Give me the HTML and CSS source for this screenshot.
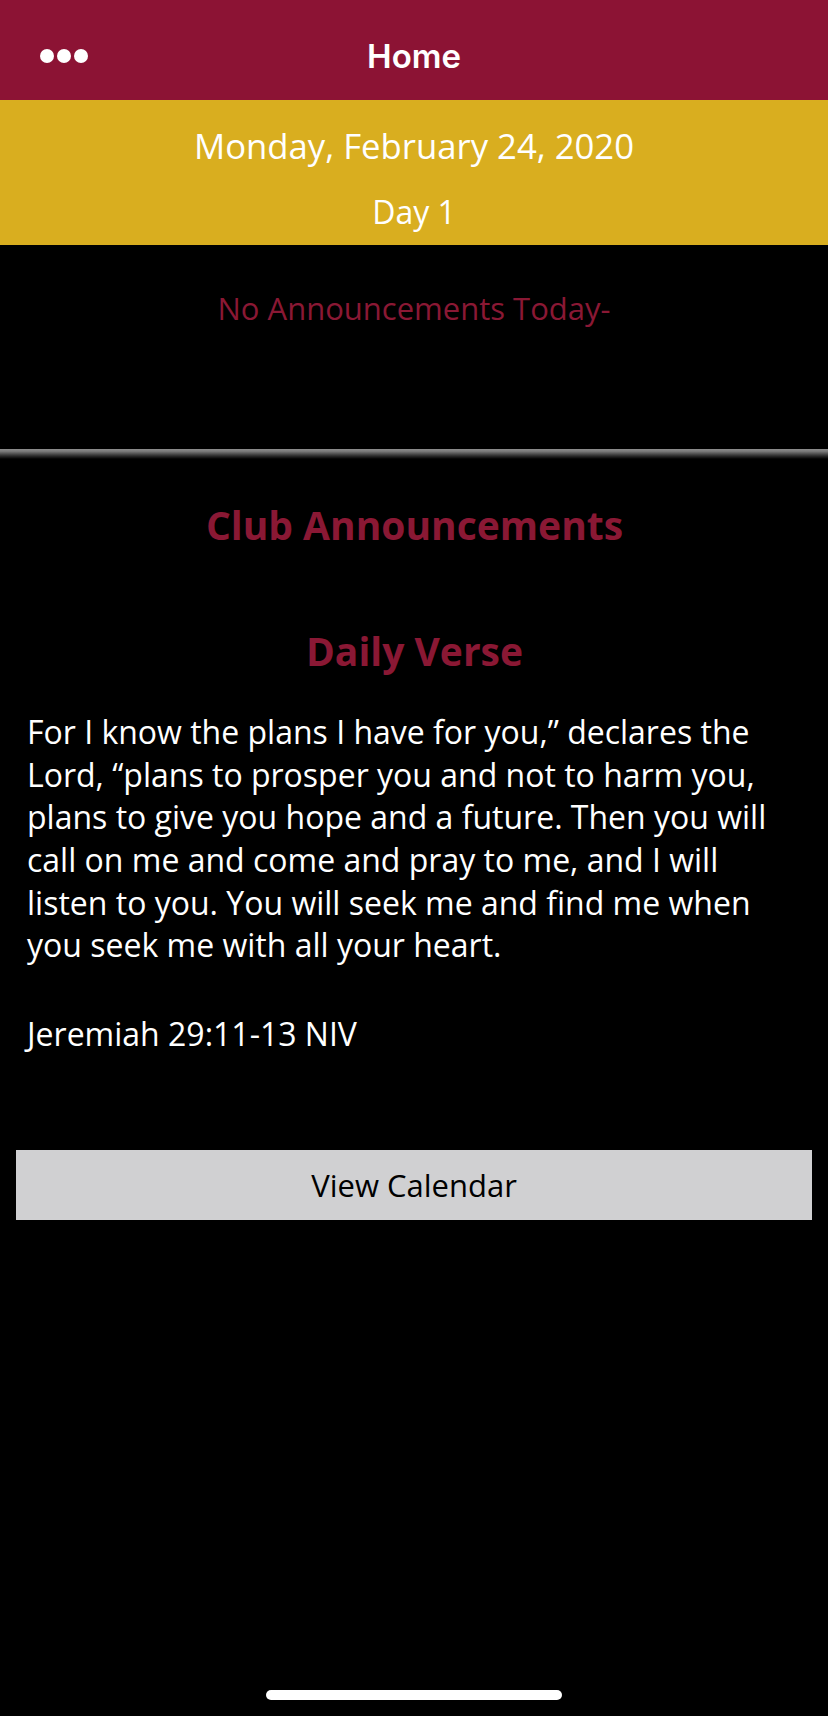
FILE: index.html
```html
<!DOCTYPE html>
<html lang="en">
<head>
<meta charset="utf-8">
<title>Home</title>
<link rel="stylesheet" href="styles.css">
</head>
<body>
<div class="screen">
  <header class="navbar">
    <div class="nav-left">
      <span class="dots" aria-label="More">
        <span class="dot"></span><span class="dot"></span><span class="dot"></span>
      </span>
    </div>
    <h1 class="nav-title">Home</h1>
    <div class="nav-right"></div>
  </header>

  <section class="dateband">
    <div class="date">Monday, February 24, 2020</div>
    <div class="day">Day 1</div>
  </section>

  <section class="today">
    <p class="no-ann">No Announcements Today-</p>
  </section>

  <div class="divider"></div>

  <section class="content">
    <h2 class="heading club">Club Announcements</h2>
    <h2 class="heading verse-title">Daily Verse</h2>
    <p class="verse">For I know the plans I have for you,” declares the Lord, “plans to prosper you and not to harm you, plans to give you hope and a future. Then you will call on me and come and pray to me, and I will listen to you. You will seek me and find me when you seek me with all your heart.</p>
    <p class="verse ref">Jeremiah 29:11-13 NIV</p>
  </section>

  <div class="btn-wrap">
    <button class="cal-btn" type="button">View Calendar</button>
  </div>

  <div class="home-indicator-wrap"><div class="home-indicator"></div></div>
</div>
</body>
</html>
```

FILE: styles.css
```css
html, body {
  margin: 0;
  padding: 0;
  background: #000;
}

.screen {
  width: 828px;
  min-height: 1716px;
  display: flex;
  flex-direction: column;
  background: #000;
  font-family: "Open Sans", "Noto Sans", sans-serif;
  color: #fff;
}

.navbar {
  height: 100px;
  box-sizing: border-box;
  padding-top: 12px;
  background: #8c1334;
  display: grid;
  grid-template-columns: 1fr auto 1fr;
  align-items: center;
}

.nav-left {
  padding-left: 40px;
  display: flex;
  align-items: center;
}

.dots {
  display: flex;
  gap: 3px;
}

.dot {
  width: 14px;
  height: 14px;
  border-radius: 50%;
  background: #fff;
}

.nav-title {
  margin: 0;
  font-family: Inter, Roboto, "Liberation Sans", sans-serif;
  font-weight: 600;
  font-size: 33px;
  line-height: 34px;
  color: #fff;
}

.dateband {
  background: #d9ae1f;
  padding: 24px 0 13px;
  display: flex;
  flex-direction: column;
  align-items: center;
  gap: 24px;
}

.date {
  font-size: 34.7px;
  line-height: 44px;
  color: #fff;
}

.day {
  font-size: 32px;
  line-height: 40px;
  color: #fff;
}

.today {
  height: 204px;
  box-sizing: border-box;
  padding-top: 43px;
}

.no-ann {
  margin: 0;
  text-align: center;
  font-size: 31px;
  line-height: 40px;
  color: #8a1834;
}

.divider {
  height: 10px;
  background: linear-gradient(#8e8e8e 0%, #777 25%, #2a2a2a 70%, #000 100%);
}

.content {
  padding: 42px 26px 0 27px;
  display: flex;
  flex-direction: column;
}

.heading {
  margin: 0;
  text-align: center;
  font-size: 39px;
  line-height: 48px;
  font-weight: 700;
  color: #8a1834;
}

.verse-title {
  margin-top: 78px;
}

.verse {
  margin: 36px 0 0;
  font-size: 32px;
  line-height: 42.66px;
  color: #fff;
}

.verse.ref {
  margin-top: 46px;
}

.btn-wrap {
  padding: 94px 16px 0;
}

.cal-btn {
  width: 100%;
  height: 70px;
  border: 0;
  border-radius: 0;
  background: #d0d0d2;
  color: #000;
  font-family: "Open Sans", "Noto Sans", sans-serif;
  font-size: 31px;
  display: flex;
  align-items: center;
  justify-content: center;
  padding: 0;
}

.home-indicator-wrap {
  margin-top: auto;
  display: flex;
  justify-content: center;
  padding-bottom: 16px;
}

.home-indicator {
  width: 296px;
  height: 10px;
  border-radius: 5px;
  background: #fff;
}
```
